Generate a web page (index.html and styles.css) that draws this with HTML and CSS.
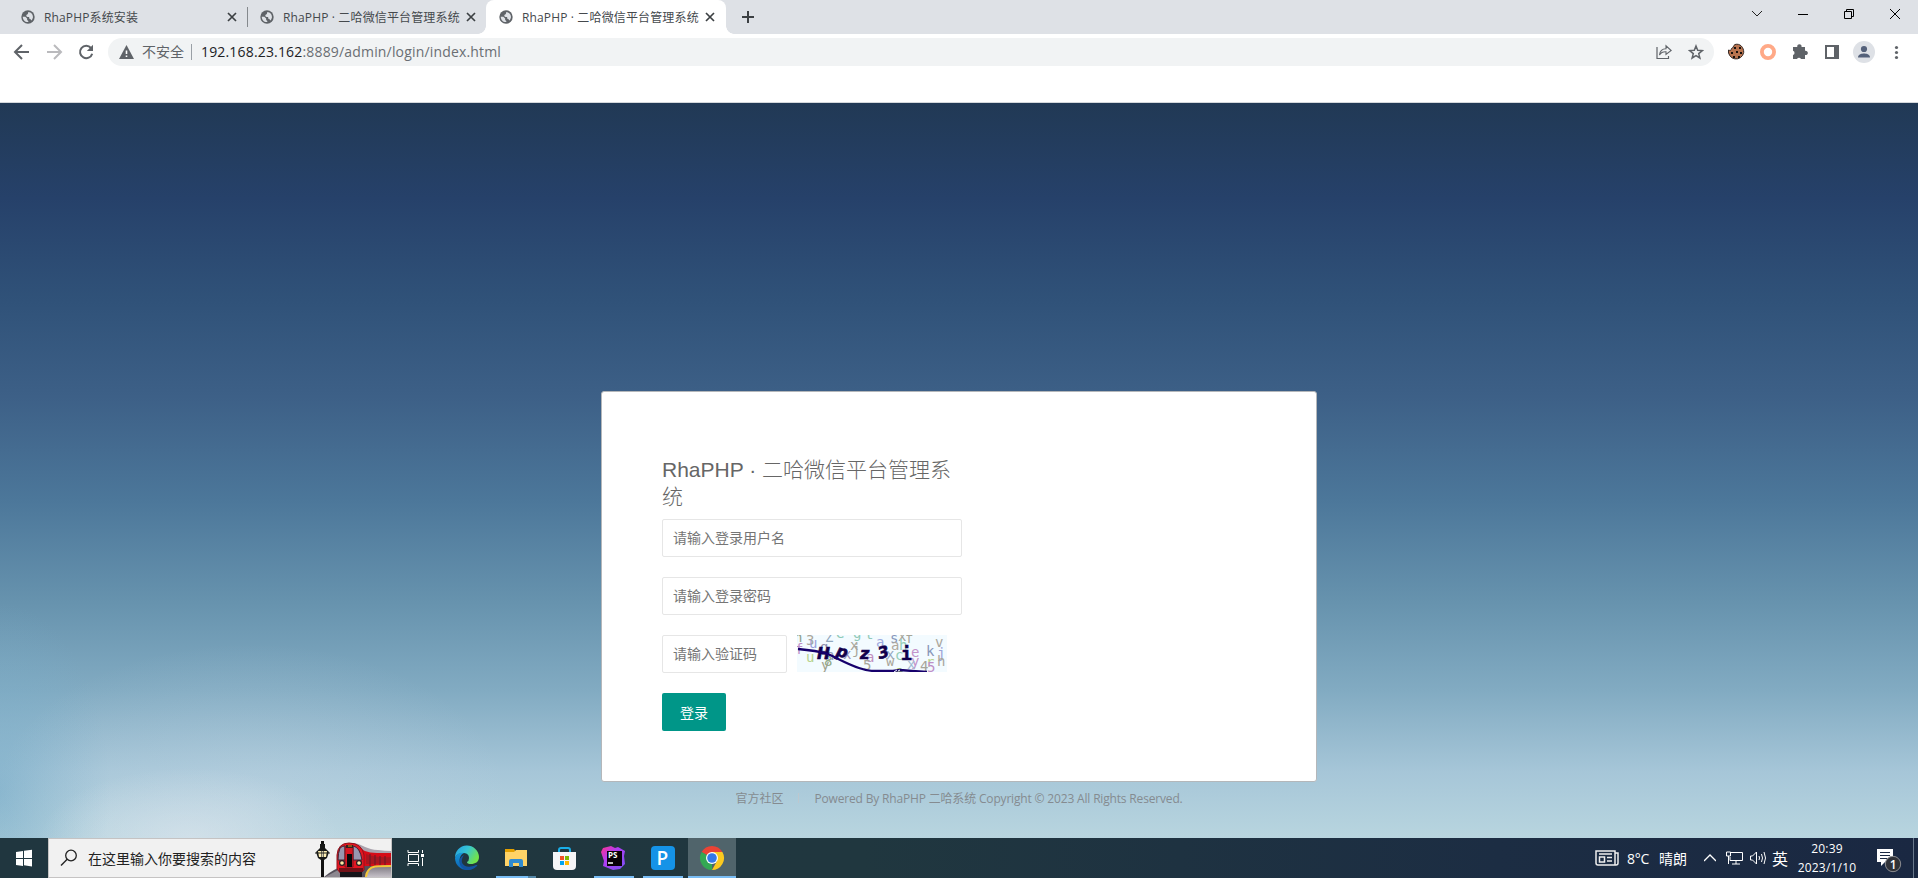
FILE: index.html
```
<!DOCTYPE html>
<html lang="zh-CN">
<head>
<meta charset="utf-8">
<title>RhaPHP · 二哈微信平台管理系统</title>
<link rel="stylesheet" href="styles.css">
</head>
<body>
<svg class="defs" width="0" height="0">
  <symbol id="globe" viewBox="0 0 24 24"><circle cx="12" cy="12" r="11.500" fill="#5f6368"/><path d="M3 11.500h4.500l3 3v2.500l2 2v1.500C7 21 3 17 3 11.500zM12.500 3.500c5 .5 8.500 4.500 8 9.500-.5 2-1.500 4-2.800 5-1-2-1.500-3-3.700-3v-3c-2 .5-5-.5-5-2.500s2.500-1.500 3-3.500c0-1 .5-1.500.5-2.500z" fill="#dee1e6"/></symbol>
  <symbol id="close" viewBox="0 0 10 10"><path d="M1 1l8 8M9 1L1 9" stroke="#3c4043" stroke-width="1.700"/></symbol>
</svg>

<header class="tabs">
  <div class="tab"><svg class="favicon"><use href="#globe"/></svg><span class="tab-title">RhaPHP系统安装</span><svg class="close"><use href="#close"/></svg></div>
  <div class="tab divided"><svg class="favicon"><use href="#globe"/></svg><span class="tab-title">RhaPHP · 二哈微信平台管理系统</span><svg class="close"><use href="#close"/></svg></div>
  <div class="tab active"><svg class="favicon"><use href="#globe"/></svg><span class="tab-title">RhaPHP · 二哈微信平台管理系统</span><svg class="close"><use href="#close"/></svg></div>
  <svg class="new-tab" viewBox="0 0 12 12"><path d="M6 0v12M0 6h12" stroke="#3c4043" stroke-width="2"/></svg>
  <div class="window-controls">
    <svg width="46" height="28"><path d="M18 11l5 5 5-5" fill="none" stroke="#222"/></svg>
    <svg width="46" height="28"><path d="M18 14.500h10" stroke="#000"/></svg>
    <svg width="46" height="28"><path d="M18.500 11.500h7v7h-7zM20.500 11.500v-2h7v7h-2" fill="none" stroke="#000"/></svg>
    <svg width="46" height="28"><path d="M18 9l10 10M28 9L18 19" stroke="#000"/></svg>
  </div>
</header>

<nav class="toolbar">
  <svg class="nav-icon" viewBox="0 0 32 32"><path d="M23 16H10M16 9l-7 7 7 7" fill="none" stroke="#5f6368" stroke-width="2"/></svg>
  <svg class="nav-icon" viewBox="0 0 32 32"><path d="M9 16h13M16 9l7 7-7 7" fill="none" stroke="#bababd" stroke-width="2"/></svg>
  <svg class="nav-icon" viewBox="0 0 32 32"><path d="M21 12a6.200 6.200 0 1 0 1.200 5.700" fill="none" stroke="#5f6368" stroke-width="2"/><path d="M23 8.800v6.200h-6.200z" fill="#5f6368"/></svg>
  <div class="omnibox">
    <svg class="warning" viewBox="0 0 15 14"><path d="M7.500 0L15 14H0z" fill="#5f6368"/><path d="M6.700 5.500h1.600V9H6.700zM6.700 10.500h1.600V12H6.700z" fill="#fff"/></svg>
    <span class="insecure">不安全</span><i class="bar"></i>
    <span class="url"><b>192.168.23.162</b>:8889/admin/login/index.html</span>
    <svg class="share" viewBox="0 0 16 16"><path d="M1 3v11.500h11.500V12" fill="none" stroke="#5f6368" stroke-width="1.200"/><path d="M3.500 11C4 6.500 6.500 4.800 10 4.800V1.800l5.200 4.700-5.200 4V7.800C7 7.600 5 8.500 3.500 11z" fill="none" stroke="#5f6368" stroke-width="1.100"/></svg>
    <svg class="star" viewBox="0 0 16 16"><path d="M8 2l1.700 4.300 4.600.3-3.600 3 1.200 4.400L8 11.600 4.100 14l1.200-4.400-3.600-3 4.600-.3z" fill="none" stroke="#5f6368" stroke-width="1.500"/></svg>
  </div>
  <div class="extensions">
    <svg viewBox="0 0 32 32"><path d="M15 8.500c5-1.500 9 3 8.700 8A7.600 7.600 0 1 1 8.500 14c1.500.8 3 .3 3-1.500 2-.2 1.500-3 3.500-4z" fill="#b9744f" stroke="#342722"/><path d="M14 11h2v2h-2zM19 11h2v2h-2zM11 16h2v2h-2zM16 15h2v2h-2zM20 16h2v2h-2zM13 20h2v2h-2zM18 20h2v2h-2z" fill="#17110e"/></svg>
    <svg viewBox="0 0 32 32"><circle cx="16" cy="16" r="6.100" fill="none" stroke="#ffa987" stroke-width="3.800"/></svg>
    <svg viewBox="0 0 32 32"><path d="M9 11h4.300a2.200 2.200 0 1 1 4.200 0H21v3.800a2.200 2.200 0 1 1 0 4.200V23h-4a2.200 2.200 0 0 0-4 0H9v-4a2.200 2.200 0 0 0 0-4.200z" fill="#5f6368"/></svg>
    <svg viewBox="0 0 32 32"><path d="M9 9h14v14H9z" fill="#5f6368"/><path d="M11 11h7v10h-7z" fill="#fff"/></svg>
    <svg viewBox="0 0 32 32"><circle cx="16" cy="16" r="11" fill="#dee1e6"/><circle cx="16" cy="13" r="3.100" fill="#54617a"/><path d="M10 21.500c0-3.500 4-4 6-4s6 .5 6 4z" fill="#54617a"/></svg>
    <svg viewBox="0 0 32 32"><circle cx="16.500" cy="11.500" r="1.600" fill="#5f6368"/><circle cx="16.500" cy="16.500" r="1.600" fill="#5f6368"/><circle cx="16.500" cy="21.500" r="1.600" fill="#5f6368"/></svg>
  </div>
</nav>
<div class="bookmarks"></div>

<main class="page">
  <form class="card">
    <h1>RhaPHP · 二哈微信平台管理系统</h1>
    <input type="text" placeholder="请输入登录用户名">
    <input type="password" placeholder="请输入登录密码">
    <div class="verify">
      <input class="code" type="text" placeholder="请输入验证码">
      <svg class="captcha" viewBox="0 0 150 37">
        <rect width="150" height="37" fill="#f3fbff"/>
        <g class="noise">
          <text x="-3" y="7" fill="#8fa08b">h</text><text x="9" y="10" fill="#aaa69b">3</text><text x="28" y="7" fill="#91a7bd">Z</text><text x="39" y="3" fill="#8cc8b5">e</text><text x="56" y="3" fill="#91c9b7">g</text><text x="68" y="4" fill="#91c9b7">t</text><text x="93" y="8" fill="#8797bb">s</text><text x="101" y="6" fill="#a4a59a">x</text><text x="108" y="8" fill="#a6a69a">f</text><text x="138" y="12" fill="#aaa69b">v</text>
          <text x="-2" y="19" fill="#be8fc8">f</text><text x="12" y="13" fill="#9aa1db">u</text><text x="23" y="17" fill="#8f8fac">g</text><text x="9" y="27" fill="#b6d38c">u</text><text x="53" y="15" fill="#a6a69a">x</text><text x="46" y="24" fill="#9a8ebb">x</text><text x="55" y="19" fill="#a8a69a">j</text><text x="79" y="12" fill="#9daae0">a</text><text x="94" y="15" fill="#b0a99d">a</text><text x="102" y="15" fill="#95cfb9">h</text><text x="114" y="22" fill="#c393ca">e</text><text x="129" y="21" fill="#8796b9">k</text><text x="140" y="23" fill="#9ba3d8">j</text>
          <text x="29" y="25" fill="#909ab5">a</text><text x="27" y="31" fill="#94ac8a">8</text><text x="24" y="35" fill="#a1a18d">y</text><text x="69" y="27" fill="#c090bf">a</text><text x="66" y="35" fill="#a6a69a">5</text><text x="89" y="24" fill="#94a7c0">x</text><text x="98" y="25" fill="#95cfb9">c</text><text x="89" y="31" fill="#aaa69b">w</text><text x="98" y="41" fill="#a4c875">e</text><text x="114" y="31" fill="#c393ca">y</text><text x="110" y="34" fill="#a1bbd4">x</text><text x="123" y="36" fill="#a6a69a">4</text><text x="129" y="32" fill="#b6d38c">r</text><text x="130" y="37" fill="#be8fc8">5</text><text x="140" y="31" fill="#aaa69b">h</text>
        </g>
        <g class="chars"><text x="20" y="24" textLength="13" lengthAdjust="spacingAndGlyphs">H</text><text x="39" y="22" transform="rotate(15 44 18)">p</text><text x="63" y="24">z</text><text x="81" y="23" transform="rotate(-14 86 18)">3</text><text x="104" y="25" class="upright">i</text></g>
        <path d="M1 14c12 1 20 2 30 5 11 5 19 10 31 14 6 2 9 3 16 3h18l7-1 12 1 15 1" fill="none" stroke="#16006c" stroke-width="2.300"/><path d="M97 37l3-2M101 36l2-1" stroke="#f3fbff"/>
      </svg>
    </div>
    <button type="button">登录</button>
  </form>
  <footer><span>官方社区</span><i></i><span class="copyright">Powered By RhaPHP 二哈系统 Copyright © 2023 All Rights Reserved.</span></footer>
</main>

<div class="taskbar">
  <svg class="start" viewBox="0 0 48 40"><path d="M16 14l7-1v7h-7zM24 12.800l8-1.100V20h-8zM16 21h7v7l-7-1zM24 21h8v7.500l-8-1.200z" fill="#fff"/></svg>
  <div class="search">
    <svg class="lens" viewBox="0 0 18 18"><circle cx="11" cy="6.500" r="5.300" fill="none" stroke="#222" stroke-width="1.300"/><path d="M7.200 10.300L1 16.500" stroke="#222" stroke-width="1.400"/></svg>
    <span>在这里输入你要搜索的内容</span>
    <svg class="train" viewBox="0 0 76 38">
      <defs><linearGradient id="road" x2="0" y2="1"><stop stop-color="#77727b"/><stop offset="1" stop-color="#c5c0c7"/></linearGradient></defs>
      <path d="M9 38Q18 30 29 27L76 25v13z" fill="#55505a"/><path d="M10 38L25 30h20v8z" fill="#8d8890"/>
      <path d="M36 4c9 1 14 8 26 8q8 1 14 1v14H39z" fill="#d60c18"/><path d="M38 4c10 1 14 7 25 7q7 1 13 1v2H62Q48 14 38 4z" fill="#aaa3ad"/><path d="M51 15q10 4 25 3v6q-14 1-25 1z" fill="#a81720"/><path d="M55 15v12M60 16v12M65 17v10M70 17v10" stroke="#611b27"/>
      <path d="M22 30V16Q23 4 34 4Q47 4 49 16v15l-5 5H27z" fill="#e31721" stroke="#93101b"/><path d="M25 9q2-2 5-2v14h-7q0-7 2-12zM38 7q7 1 9 14h-9z" fill="#9897b0" stroke="#432333"/><path d="M30 8h8v20h-8z" fill="#d91622" stroke="#7b1520"/><path d="M32 15h5v13h-5z" fill="#060709"/><path d="M31 6h7v3h-7z" fill="#312221"/><path d="M33 7h4" stroke="#e0941f"/><path d="M24 29h24v4H24z" fill="#721017"/><path d="M25 33h22v5H25z" fill="#151318"/>
      <circle cx="27" cy="24" r="3" fill="#252125"/><circle cx="27" cy="24" r="1.800" fill="#ffe9a4"/><circle cx="44" cy="24" r="3" fill="#252125"/><circle cx="44" cy="24" r="1.800" fill="#ffe9a4"/>
      <path d="M50 38Q51 29 60 27Q67 26 76 26v12z" fill="url(#road)"/><path d="M51 38Q52 29 60 27.500Q66 27 76 27" fill="none" stroke="#f3c637" stroke-width="2"/>
      <path d="M7.500 2v36" stroke="#111" stroke-width="3"/><path d="M5 5h5v4l4 4-2 6-3 2H6l-3-2-2-6 4-4z" fill="#171817"/><path d="M3 12h3v6H4zM9 12h3l-1 6H9z" fill="#fff0b5"/><path d="M6.500 12h2v6h-2z" fill="#d4ccaa"/><path d="M0 14h15" stroke="#242421"/>
    </svg>
  </div>
  <div class="apps">
    <svg class="app" viewBox="0 0 48 40"><path d="M16 12v2.500h10.500V12M16 28v-2.500h10.500V28M16.500 16.500h10v7h-10zM30.500 12v3M30.500 20v8" fill="none" stroke="#fff"/><path d="M29 16h3v3h-3z" fill="#fff"/></svg>
    <svg class="app edge" viewBox="0 0 48 40"><defs><linearGradient id="edge-a" x2="1" y2=".5"><stop stop-color="#249de4"/><stop offset=".5" stop-color="#36c5d3"/><stop offset="1" stop-color="#71e34b"/></linearGradient><linearGradient id="edge-b" x2="0" y2="1"><stop stop-color="#159bd8"/><stop offset="1" stop-color="#0c5eb4"/></linearGradient></defs><path d="M12 20A12 12 0 0 1 36 19c0 5-4 7-8 7q-4 0-4-2 2-1 2-4c0-4-3-5-6-5-4 0-7 2-8 5z" fill="url(#edge-a)"/><path d="M12 20c1-4 5-6 9-5-4 2-5 6-4 10 2 4 7 6 11 5q3 0 5-2c-3 3-6 4-9 4a12 12 0 0 1-12-12z" fill="url(#edge-b)"/><path d="M21 17c-6 8 1 15 12 10 1 0 2 0 1 1-3 3-7 4-10 4-9-2-10-12-3-15z" fill="#1354a1"/></svg>
    <svg class="app open explorer" viewBox="0 0 48 40"><path d="M13 11h9l2 3h-11z" fill="#e4a000"/><path d="M13 14h9l2-2h11v16H13z" fill="#ffd367"/><path d="M17 29v-6q0-2 2-2h10q2 0 2 2v6h-4v-4h-6v4z" fill="#318bcf"/></svg>
    <svg class="app" viewBox="0 0 48 40"><path d="M18 15v-3q0-2 2-2h7q2 0 2 2v3" fill="none" stroke="#19aee8" stroke-width="2"/><path d="M12 14h23v14q0 4-4 4H16q-4 0-4-4z" fill="#f5f5f6"/><path d="M19 18h4v4h-4z" fill="#f05124"/><path d="M24 18h4v4h-4z" fill="#7eb900"/><path d="M19 23h4v4h-4z" fill="#00a3ee"/><path d="M24 23h4v4h-4z" fill="#ffb900"/></svg>
    <svg class="app open" viewBox="0 0 48 40"><defs><linearGradient id="storm" x2="1" y2="1"><stop stop-color="#ff318c"/><stop offset=".4" stop-color="#b03df4"/><stop offset="1" stop-color="#7952f5"/></linearGradient></defs><path d="M13 10l8-2 4 2 3-1 7 4-1 5 1 8-5 5-7 1-10-4 1-5-3-9z" fill="url(#storm)"/><path d="M17 13h15v15H17z" fill="#080008"/><text x="18" y="20" class="ps">PS</text><path d="M18 25h5" stroke="#bbb" stroke-width="2"/></svg>
    <svg class="app open" viewBox="0 0 48 40"><rect x="12" y="8" width="24" height="24" rx="4" fill="#1593e7"/><text x="17.500" y="27" class="p">P</text></svg>
    <svg class="app open current" viewBox="0 0 48 40"><path d="M24 20L13.600 14A12 12 0 0 1 34.400 14z" fill="#ea4335"/><path d="M24 20L13.600 14A12 12 0 0 0 24 32z" fill="#34a853"/><path d="M24 32A12 12 0 0 0 34.400 14H24l5 9z" fill="#fbc91f"/><circle cx="24" cy="20" r="6" fill="#fff"/><circle cx="24" cy="20" r="4.800" fill="#3478e8"/></svg>
  </div>
  <div class="tray">
    <svg class="news" viewBox="0 0 24 18"><path d="M1 2h19v14H3q-2 0-2-2zM20 4h3v10q0 2-2 2h-2" fill="none" stroke="#eee" stroke-width="1.500"/><path d="M4 5h13M12 8.500h5M12 12h5M4.500 8h5v5h-5z" fill="none" stroke="#eee" stroke-width="1.500"/></svg>
    <span class="degrees">8°C</span><span class="weather">晴朗</span>
    <svg class="caret" viewBox="0 0 12 8"><path d="M0 7l6-6 6 6" fill="none" stroke="#fff" stroke-width="1.300"/></svg>
    <svg class="network" viewBox="0 0 17 14"><path d="M5 1.500h11.500v8H4V6M10 10v3M6 13h8M.5 1h4v4h-4zM2.500 5v8" fill="none" stroke="#fff"/></svg>
    <svg class="speaker" viewBox="0 0 17 14"><path d="M.5 5h2l4-4v12l-4-4h-2zM9 5q1 2 0 4M11.500 3q2 4 0 8M14 1q3 6 0 12" fill="none" stroke="#fff"/></svg>
    <span class="ime">英</span>
    <div class="clock"><span>20:39</span><span>2023/1/10</span></div>
    <svg class="notices" viewBox="0 0 26 26"><path d="M0 0h16v13H8l-4 4v-4H0z" fill="#fff"/><path d="M3 3.500h10M3 6.500h10M3 9.500h7" stroke="#1b2943"/><circle cx="16" cy="15" r="7.700" fill="#303238" stroke="#8b8c90"/><text x="12.800" y="19.500">1</text></svg>
  </div>
</div>
</body>
</html>
```
FILE: styles.css
```
* { box-sizing: border-box; }
body { margin: 0; width: 1918px; height: 878px; overflow: hidden; display: flex; flex-direction: column; font-family: "Open Sans", "Noto Sans CJK SC", sans-serif; background: #fff; }
svg { display: block; flex: none; }
.defs { position: absolute; }

/* Browser frame */
.tabs { height: 34px; flex: none; display: flex; align-items: center; padding-left: 8px; background: #dee1e6; }
.tab { width: 239px; height: 34px; display: flex; align-items: center; padding: 0 8px 0 13px; color: #45494d; }
.tab.divided { background: linear-gradient(#85898d, #85898d) 0 50% / 1px 20px no-repeat; }
.tab.active { position: relative; width: 240px; border-radius: 8px 8px 0 0; background: #fff; }
.tab.active::before, .tab.active::after { content: ""; position: absolute; bottom: 0; width: 8px; height: 8px; }
.tab.active::before { left: -8px; background: radial-gradient(circle at 0 0, transparent 7.5px, #fff 8px); }
.tab.active::after { right: -8px; background: radial-gradient(circle at 100% 0, transparent 7.5px, #fff 8px); }
.favicon { width: 14px; height: 14px; }
.tab-title { width: 179px; margin-left: 9px; font-size: 12px; white-space: nowrap; letter-spacing: .14px; }
.close { width: 10px; height: 10px; margin-left: 4px; }
.new-tab { width: 12px; height: 12px; margin-left: 16px; }
.window-controls { margin-left: auto; display: flex; align-self: flex-start; }
.toolbar { height: 36px; flex: none; display: flex; align-items: center; padding-left: 6px; }
.nav-icon { width: 32px; height: 32px; }
.omnibox { width: 1606px; height: 28px; margin-left: 6px; border-radius: 14px; background: #f1f3f4; display: flex; align-items: center; padding-left: 11px; }
.warning { width: 15px; height: 14px; }
.insecure { width: 43px; margin-left: 8px; font-size: 14px; line-height: 20px; white-space: nowrap; color: #5f6368; }
.bar { width: 1px; height: 16px; margin: 0 9px 0 6px; background: #9aa0a6; }
.url { font-size: 14px; line-height: 20px; letter-spacing: .17px; color: #6a6e73; white-space: nowrap; }
.url b { font-weight: 400; color: #202124; }
.share { width: 16px; height: 16px; margin-left: auto; }
.star { width: 16px; height: 16px; margin: 0 10px 0 16px; }
.extensions { display: flex; margin-left: 6px; }
.extensions svg { width: 32px; height: 32px; }
.bookmarks { height: 33px; flex: none; border-bottom: 1px solid #d4d8dc; }

/* Login page */
.page {
  height: 735px; flex: none; display: flex; flex-direction: column; align-items: center; padding-top: 288px;
  background:
    radial-gradient(ellipse 150px 70px at 190px 735px, rgba(222,230,238,.6), rgba(222,230,238,0)),
    radial-gradient(ellipse 260px 160px at 250px 700px, rgba(205,220,232,.3), rgba(205,220,232,0)),
    radial-gradient(ellipse 110px 190px at 0 690px, rgba(120,172,200,.65), rgba(120,172,200,0)),
    linear-gradient(#213955 0%, #26416a 13%, #305279 27%, #3d6087 40%, #4c779a 54%, #6793ae 68%, #82abc2 80%, #a6c6d8 91%, #b8d5df 100%);
}
.card { width: 716px; height: 391px; flex: none; border: 1px solid #b4b7ba; border-radius: 3px; background: #fff; padding: 64px 60px 0; display: flex; flex-direction: column; align-items: flex-start; }
.card > * { flex: none; }
h1 { width: 300px; margin: 0 0 9px; font: 300 21px/27px "Liberation Sans", "Noto Sans CJK SC", sans-serif; color: #666; }
.card > input, .verify { margin-bottom: 20px; }
input { display: block; width: 300px; height: 38px; padding: 0 10px; border: 1px solid #e6e6e6; border-radius: 2px; font: 14px "Liberation Sans", "Noto Sans CJK SC", sans-serif; }
input::placeholder { color: #757575; opacity: 1; }
.verify { display: flex; gap: 10px; }
.verify .code { width: 125px; }
.captcha { width: 150px; height: 37px; }
.noise { font: 14px "DejaVu Sans Mono", monospace; }
.chars { font: italic 900 16px "DejaVu Sans", sans-serif; fill: #12004b; stroke: #12004b; stroke-width: .6; }
.upright { font: bold 18px "DejaVu Sans Mono", monospace; }
button { width: 64px; height: 38px; border: 0; border-radius: 2px; background: #009688; color: #fff; font: 14px "Noto Sans CJK SC", sans-serif; padding: 0; }
footer { height: 32px; display: flex; align-items: center; font: 12px "Open Sans", "Noto Sans CJK SC", sans-serif; color: #858b90; white-space: nowrap; }
footer i { width: 1px; height: 10px; margin: 0 15px; background: #bdc7ce; }
.copyright { letter-spacing: -.17px; }

/* Desktop taskbar */
.taskbar { height: 40px; flex: none; display: flex; color: #fff; background: linear-gradient(90deg, #20363f 0, #20373f 45%, #1c2d43 78%, #1a2842 100%); }
.start { width: 48px; height: 40px; }
.search { width: 344px; height: 40px; flex: none; display: flex; align-items: center; padding-left: 11px; border: 1px solid #c5c3c3; background: #f1f1f1; color: #222; }
.lens { width: 18px; height: 18px; }
.search span { width: 170px; margin-left: 10px; font: 14px "Noto Sans CJK SC", sans-serif; white-space: nowrap; }
.train { width: 76px; height: 38px; margin-left: auto; }
.apps { display: flex; gap: 1px; }
.app { width: 48px; height: 40px; }
.edge { margin-left: 2px; }
.open { background: linear-gradient(#79bdf5, #79bdf5) 50% 100% / 40px 2px no-repeat; }
.explorer { background: linear-gradient(90deg, #79bdf5 32px, #5487a8 32px) 50% 100% / 40px 2px no-repeat; }
.current { background: linear-gradient(#79bdf5, #79bdf5) 0 100% / 48px 2px no-repeat, #50646b; }
.ps { font: bold 8px "Open Sans", sans-serif; fill: #fff; }
.p { font: 600 19px "Open Sans", sans-serif; fill: #fff; }
.tray { margin-left: auto; width: 323px; display: flex; align-items: center; white-space: nowrap; background: linear-gradient(#68788b, #68788b) 318px 0 / 1px 100% no-repeat; }
.news { width: 24px; height: 18px; }
.degrees { width: 32px; margin-left: 8px; font-size: 14px; letter-spacing: -.2px; }
.weather { width: 28px; font-size: 14px; }
.caret { width: 12px; height: 8px; margin-left: 17px; }
.network { width: 17px; height: 14px; margin-left: 10px; }
.speaker { width: 17px; height: 14px; margin-left: 7px; }
.ime { width: 17px; margin-left: 5px; font-size: 16px; }
.clock { width: 66px; margin-left: 5px; height: 38px; display: flex; flex-direction: column; align-items: center; font-size: 12px; line-height: 19px; letter-spacing: .2px; }
.notices { width: 26px; height: 26px; margin: 7px 0 0 17px; }
.notices text { font: 600 12px "Open Sans", sans-serif; fill: #fff; }
```
